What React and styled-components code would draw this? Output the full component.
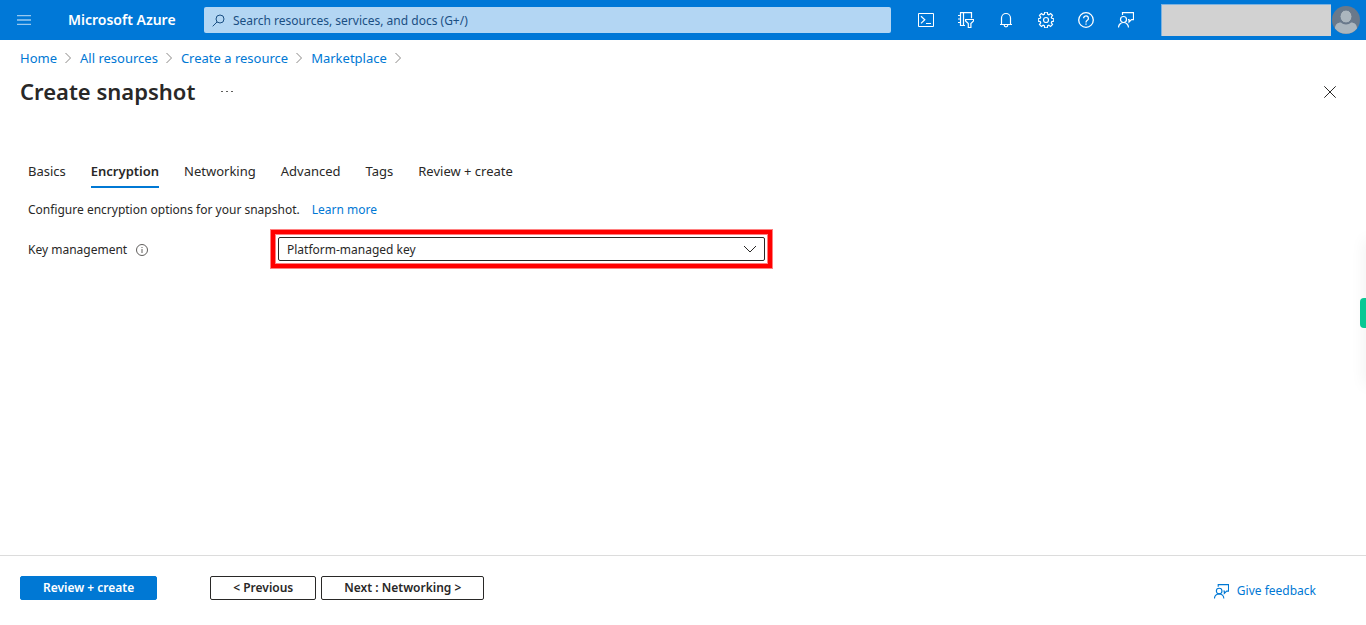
import React, { useState } from 'react';
import styled, { createGlobalStyle } from 'styled-components';

const GlobalStyle = createGlobalStyle`
  * {
    box-sizing: border-box;
  }

  body {
    margin: 0;
    background-color: #fff;
    color: #292827;
    font-family: "Segoe UI", "Noto Sans", "Open Sans", sans-serif;
    font-size: 12px;
    line-height: 20px;
  }

  button, input, select {
    font: inherit;
    color: inherit;
  }
`

const Page = styled.div`
  display: flex;
  flex-direction: column;
  min-height: 100vh;
`

const TopBar = styled.header`
  display: flex;
  align-items: center;
  height: 40px;
  padding-right: 5px;
  background-color: #0078d7;
  color: #fff;
`

const IconButton = styled.button`
  display: flex;
  align-items: center;
  justify-content: center;
  flex: none;
  width: ${props => props.$width || 40}px;
  height: 40px;
  padding: 0;
  border: none;
  background: none;
  color: inherit;
  cursor: pointer;
`

const Brand = styled.a`
  flex: none;
  width: 136px;
  margin-left: 20px;
  color: #fff;
  font-size: 14px;
  font-weight: 600;
  text-decoration: none;
  white-space: nowrap;
`

const SearchBox = styled.label`
  display: flex;
  align-items: center;
  flex: 1;
  height: 26px;
  gap: 8px;
  padding: 0 8px;
  border-radius: 2px;
  background-color: #b3d6f3;
  color: #1a4f83;
`

const SearchInput = styled.input`
  flex: 1;
  min-width: 0;
  padding: 2px 0 0;
  border: none;
  outline: none;
  background: none;

  &::placeholder {
    color: #1a4f83;
    opacity: 1;
  }
`

const ToolGroup = styled.div`
  display: flex;
  margin: 0 15px;
`

const AccountName = styled.div`
  flex: none;
  width: 170px;
  height: 32px;
  border: solid #7cb2e0;
  border-width: 1px 0 0 1px;
  background-color: #d2d2d2;
`

const Breadcrumb = styled.nav`
  display: flex;
  align-items: center;
  gap: 8px;
  padding: 8px 20px 0;
  font-size: 13px;
`

const Link = styled.a`
  display: inline-flex;
  align-items: center;
  gap: 8px;
  color: #0078d4;
  text-decoration: none;
`

const TitleRow = styled.div`
  display: flex;
  align-items: center;
  height: 48px;
  padding: 0 16px 0 20px;
`

const Title = styled.h1`
  margin: 0 12px 0 0;
  padding-bottom: 2px;
  font-size: 22px;
  font-weight: 600;
  line-height: 32px;
`

const Spacer = styled.div`
  flex: 1;
`

const Content = styled.main`
  flex: 1;
  padding: 42px 28px 0;
`

const TabList = styled.div`
  display: flex;
  gap: 25px;
  font-size: 13px;
`

const Tab = styled.button`
  height: 30px;
  padding: 0 0 2px;
  border: none;
  border-bottom: 2px solid ${props => (props.$active ? '#0078d4' : 'transparent')};
  background: none;
  font-weight: ${props => (props.$active ? 600 : 400)};
  cursor: pointer;
`

const Description = styled.p`
  display: flex;
  gap: 12px;
  margin: 12px 0 0;
`

const FormRow = styled.div`
  display: grid;
  grid-template-columns: 243px 1fr;
  align-items: center;
  max-width: 744px;
  margin-top: 10px;
`

const FieldLabel = styled.label`
  display: flex;
  align-items: center;
  gap: 9px;
  padding-top: 2px;

  > svg {
    color: #605e5c;
  }
`

const Highlight = styled.div`
  display: grid;
  align-items: center;
  padding: 3px;
  border: 4px solid #f00;
  box-shadow: 0 0 0 1px #ff8080, inset 0 0 0 1px #ff8080;

  > * {
    grid-area: 1 / 1;
  }

  > svg {
    justify-self: end;
    margin-right: 8px;
    pointer-events: none;
  }
`

const Select = styled.select`
  appearance: none;
  width: 100%;
  height: 24px;
  padding: 1px 28px 0 8px;
  border: 1px solid #292827;
  border-radius: 2px;
  background-color: #fff;
`

const Footer = styled.footer`
  display: flex;
  align-items: flex-start;
  height: 70px;
  padding: 20px 50px 0 20px;
  border-top: 1px solid #dcdcdc;
`

const FooterButton = styled.button`
  height: 24px;
  padding: 0 22px;
  border: 1px solid ${props => (props.$primary ? '#0078d4' : '#292827')};
  border-radius: 2px;
  background-color: ${props => (props.$primary ? '#0078d4' : '#fff')};
  color: ${props => (props.$primary ? '#fff' : '#292827')};
  font-weight: 600;
  cursor: pointer;
`

const StepButtons = styled.div`
  display: flex;
  gap: 5px;
  margin-left: 53px;
`

const FeedbackLink = styled(Link)`
  padding-top: 5px;
`

const FeedbackTab = styled.button`
  position: fixed;
  top: 298px;
  right: 0;
  width: 6px;
  height: 30px;
  padding: 0;
  border: none;
  border-radius: 4px 0 0 4px;
  background-color: #08c894;
`

const SideShadow = styled.div`
  position: fixed;
  top: 240px;
  right: -10px;
  width: 10px;
  height: 145px;
  box-shadow: 0 0 16px rgba(0, 0, 0, 0.08);
`

function Icon({ size = 16, box = 16, width = 1, children }) {
    return (
        <svg
            width={size}
            height={size}
            viewBox={`0 0 ${box} ${box}`}
            fill="none"
            stroke="currentColor"
            strokeWidth={width}
            aria-hidden="true"
        >
            {children}
        </svg>
    );
}

const MenuIcon = () => (
    <Icon>
        <path d="M1 3.6h14M1 8h14M1 12.4h14" strokeWidth="1.4" opacity="0.6" />
    </Icon>
);

const SearchIcon = () => (
    <Icon size={13} box={13}>
        <circle cx="8" cy="5" r="4" />
        <path d="M5 8L.7 12.3" />
    </Icon>
);

const ShellIcon = () => (
    <Icon>
        <path d="M.5 1.5h15v13H.5z" />
        <path d="M3 4.2l3.8 3.6L3 11.4M8 11.5h5" strokeWidth="1.2" />
    </Icon>
);

const DirectoryIcon = () => (
    <Icon width={1.2}>
        <path d="M7 13.5H2.5V.6h11v5.6M5.5.5v13M0 3.5h3M0 7h3M0 10.5h3" />
        <path d="M7.6 7.5h8v1.4l-2.7 2.6v4h-2.6v-4L7.6 8.9z" />
    </Icon>
);

const BellIcon = () => (
    <Icon width={1.2}>
        <path d="M3.5 12.5V6a4.5 4.5 0 0 1 9 0v6.5M2 12.5h12M6.2 13a1.8 1.8 0 0 0 3.6 0" />
    </Icon>
);

const GearIcon = () => (
    <Icon width={1.2}>
        <path
            d="M6.7.7h2.6l.4 2 1.2.5 1.7-1.1 1.9 1.8-1.2 1.8.5 1.1 2 .4v2.5l-2 .4-.5 1.2 1.2 1.7-1.9 1.9-1.7-1.2-1.2.5-.4 2.1H6.7l-.4-2.1-1.2-.5-1.7 1.2-1.9-1.9 1.2-1.7-.5-1.2-2-.4V7.2l2-.4.5-1.1-1.2-1.8 1.9-1.8 1.7 1.1 1.2-.5z"
            transform="translate(0 -.5)"
        />
        <circle cx="8" cy="8" r="2.5" />
    </Icon>
);

const HelpIcon = () => (
    <Icon width={1.3}>
        <circle cx="8" cy="8" r="7.3" />
        <path d="M5.6 6.3a2.4 2.4 0 1 1 3.7 2C8.4 8.9 8 9.3 8 10.5M8 11.5v1.3" />
    </Icon>
);

const FeedbackIcon = ({ size = 16 }) => (
    <Icon size={size} width={1.2}>
        <circle cx="5.5" cy="7.5" r="3" />
        <path d="M.5 15.5a5 5 0 0 1 10 0M4.5 3V.6h11v7h-2L11 10V7.5h-1" />
    </Icon>
);

const AvatarIcon = () => (
    <svg width="28" height="28" viewBox="0 0 28 28" aria-hidden="true">
        <circle cx="14" cy="14" r="14" fill="#69798b" />
        <path d="M3 22.5c0-4 2.5-6 6-6 2 2.6 8 2.6 10 0 3.5 0 6 2 6 6a14 14 0 0 1-22 0z" fill="#abb6be" />
        <ellipse cx="14" cy="10.5" rx="6" ry="6.5" fill="#abb6be" stroke="#69798b" />
    </svg>
);

const SeparatorIcon = () => (
    <svg width="7" height="12" viewBox="0 0 7 12" fill="none" stroke="#8a8886" aria-hidden="true">
        <path d="M.5 1l5 5-5 5" />
    </svg>
);

const InfoIcon = () => (
    <Icon size={12} box={12}>
        <circle cx="6" cy="6" r="5.5" />
        <path d="M6 5v4M6 3v1" />
    </Icon>
);

const ChevronIcon = () => (
    <Icon size={14} box={14}>
        <path d="M1 4l6 6 6-6" />
    </Icon>
);

const CloseIcon = () => (
    <Icon size={12} box={12}>
        <path d="M.3.3l11.4 11.4M11.7.3L.3 11.7" />
    </Icon>
);

const MoreIcon = () => (
    <svg width="12" height="4" viewBox="0 0 12 4" fill="#605e5c" aria-hidden="true">
        <path d="M0 1h2v1H0zM5 1h2v1H5zM10 1h2v1h-2z" />
    </svg>
);

const tools = [
    { name: 'Cloud Shell', icon: <ShellIcon /> },
    { name: 'Directories + subscriptions', icon: <DirectoryIcon /> },
    { name: 'Notifications', icon: <BellIcon /> },
    { name: 'Settings', icon: <GearIcon /> },
    { name: 'Help', icon: <HelpIcon /> },
    { name: 'Feedback', icon: <FeedbackIcon /> },
];

const crumbs = ['Home', 'All resources', 'Create a resource', 'Marketplace'];

const tabs = ['Basics', 'Encryption', 'Networking', 'Advanced', 'Tags', 'Review + create'];

export default function App() {
    const [activeTab, setActiveTab] = useState('Encryption');

    return (
        <Page>
            <GlobalStyle />
            <TopBar>
                <IconButton $width={48} aria-label="Show portal menu"><MenuIcon /></IconButton>
                <Brand href="#">Microsoft Azure</Brand>
                <SearchBox>
                    <SearchIcon />
                    <SearchInput
                        type="text"
                        aria-label="Search"
                        placeholder="Search resources, services, and docs (G+/)"
                    />
                </SearchBox>
                <ToolGroup>
                    {tools.map(tool => (
                        <IconButton key={tool.name} aria-label={tool.name}>{tool.icon}</IconButton>
                    ))}
                </ToolGroup>
                <AccountName />
                <IconButton $width={30} aria-label="Account"><AvatarIcon /></IconButton>
            </TopBar>

            <Breadcrumb aria-label="Breadcrumb">
                {crumbs.map(crumb => (
                    <React.Fragment key={crumb}>
                        <Link href="#">{crumb}</Link>
                        <SeparatorIcon />
                    </React.Fragment>
                ))}
            </Breadcrumb>

            <TitleRow>
                <Title>Create snapshot</Title>
                <IconButton aria-label="More"><MoreIcon /></IconButton>
                <Spacer />
                <IconButton aria-label="Close"><CloseIcon /></IconButton>
            </TitleRow>

            <Content>
                <TabList role="tablist">
                    {tabs.map(tab => (
                        <Tab
                            key={tab}
                            role="tab"
                            aria-selected={tab === activeTab}
                            $active={tab === activeTab}
                            onClick={() => setActiveTab(tab)}
                        >
                            {tab}
                        </Tab>
                    ))}
                </TabList>
                <Description>
                    Configure encryption options for your snapshot.
                    <Link href="#">Learn more</Link>
                </Description>
                <FormRow>
                    <FieldLabel htmlFor="key-management">
                        Key management
                        <InfoIcon />
                    </FieldLabel>
                    <Highlight>
                        <Select id="key-management">
                            <option>Platform-managed key</option>
                            <option>Customer-managed key</option>
                        </Select>
                        <ChevronIcon />
                    </Highlight>
                </FormRow>
            </Content>

            <Footer>
                <FooterButton $primary>Review + create</FooterButton>
                <StepButtons>
                    <FooterButton>&lt; Previous</FooterButton>
                    <FooterButton>Next : Networking &gt;</FooterButton>
                </StepButtons>
                <Spacer />
                <FeedbackLink href="#">
                    <FeedbackIcon size={15} />
                    Give feedback
                </FeedbackLink>
            </Footer>

            <SideShadow />
            <FeedbackTab aria-label="Open side panel" />
        </Page>
    );
}
